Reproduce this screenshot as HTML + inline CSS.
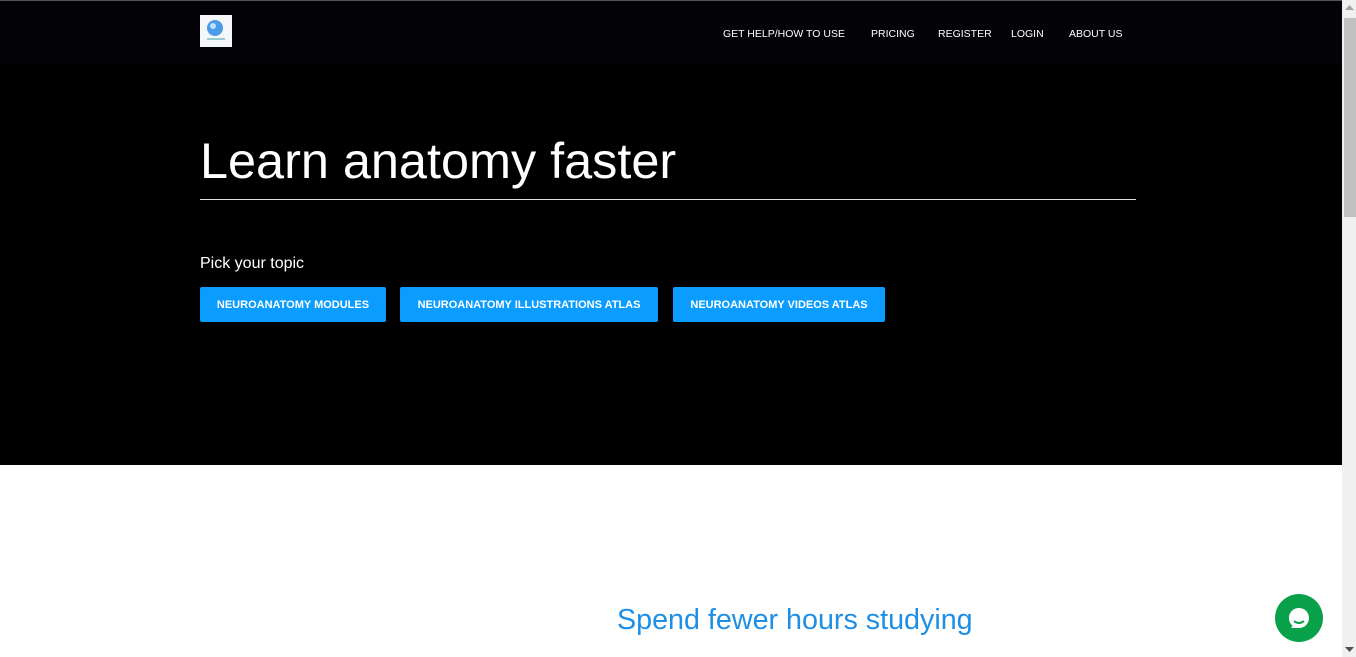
<!DOCTYPE html>
<html><head><meta charset="utf-8"><style>
*{margin:0;padding:0;box-sizing:border-box}
html,body{width:1356px;height:657px;overflow:hidden;background:#fff;font-family:"Liberation Sans",Arial,sans-serif}
.top{position:absolute;left:0;top:0;width:1342px;height:1px;background:#555}
.hdr{position:absolute;left:0;top:1px;width:1342px;height:64px;background:#030307}
.hero{position:absolute;left:0;top:65px;width:1342px;height:400px;background:#000}
.logo{position:absolute;left:200px;top:15px;width:32px;height:32px;background:#f4f6f8}
.nav{position:absolute;top:28px;color:#fff;font-size:10.5px;letter-spacing:0}
h1{position:absolute;left:200px;top:131px;color:#fff;font-weight:400;font-size:50.4px;line-height:60px;white-space:nowrap}
.rule{position:absolute;left:200px;top:199px;width:936px;height:1px;background:#ddd}
.pick{position:absolute;left:200px;top:255px;color:#fff;font-size:16px}
.btn{position:absolute;top:287px;height:35px;background:#0b9cff;color:#fff;font-weight:700;font-size:11px;line-height:36px;text-align:center;border-radius:2px;white-space:nowrap}
h2{position:absolute;left:617px;top:604px;color:#1f8fe6;font-weight:400;font-size:28.7px;white-space:nowrap}
.chat{position:absolute;left:1275px;top:594px;width:48px;height:48px;border-radius:50%;background:#0aa14b}
.sb{position:absolute;left:1342px;top:0;width:14px;height:657px;background:#f0f0f0}
.thumb{position:absolute;left:1344px;top:18px;width:12px;height:199px;background:#c1c1c1}
</style></head><body>
<div class="hdr"></div><div class="hero"></div><div class="top"></div>
<div class="logo"><svg width="32" height="32"><circle cx="15" cy="13" r="8" fill="#4a9be8"/><circle cx="13" cy="11" r="3" fill="#bfe0ff"/><rect x="7" y="23" width="18" height="2" fill="#9cc"/></svg></div>
<div class="nav" style="left:723px">GET HELP/HOW TO USE</div>
<div class="nav" style="left:871px">PRICING</div>
<div class="nav" style="left:938px">REGISTER</div>
<div class="nav" style="left:1011px">LOGIN</div>
<div class="nav" style="left:1069px">ABOUT US</div>
<h1>Learn anatomy faster</h1>
<div class="rule"></div>
<div class="pick">Pick your topic</div>
<div class="btn" style="left:200px;width:186px">NEUROANATOMY MODULES</div>
<div class="btn" style="left:400px;width:258px">NEUROANATOMY ILLUSTRATIONS ATLAS</div>
<div class="btn" style="left:673px;width:212px">NEUROANATOMY VIDEOS ATLAS</div>
<h2>Spend fewer hours studying</h2>
<div class="chat"><svg width="48" height="48"><path d="M24 14a10 10 0 1 0 0 20h-8l3-4a10 10 0 0 1 5-16z" fill="#fff"/><circle cx="24" cy="24" r="10" fill="#fff"/><path d="M19 27q5 4 10 0" stroke="#0aa14b" stroke-width="2" fill="none"/></svg></div>
<div class="sb"></div><div class="thumb"></div>
<svg style="position:absolute;left:1345px;top:5px" width="9" height="6"><path d="M0 5L4.5 0 9 5z" fill="#a3a3a3"/></svg>
<svg style="position:absolute;left:1345px;top:647px" width="9" height="6"><path d="M0 0L4.5 5 9 0z" fill="#505050"/></svg>
</body></html>
